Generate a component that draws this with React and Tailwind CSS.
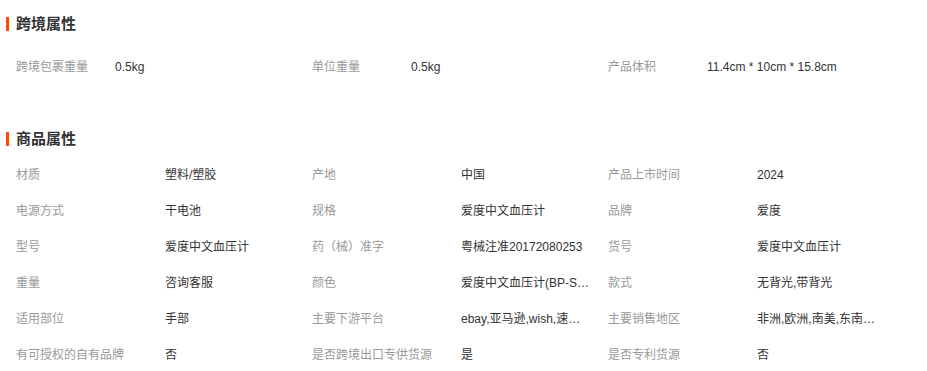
import React from "react";

const crossBorder = [
  { label: "跨境包裹重量", value: "0.5kg" },
  { label: "单位重量", value: "0.5kg" },
  { label: "产品体积", value: "11.4cm * 10cm * 15.8cm" },
];

// wide: value cell gets a few more pixels before the ellipsis
const attrs = [
  { label: "材质", value: "塑料/塑胶" },
  { label: "产地", value: "中国" },
  { label: "产品上市时间", value: "2024" },
  { label: "电源方式", value: "干电池" },
  { label: "规格", value: "爱度中文血压计" },
  { label: "品牌", value: "爱度" },
  { label: "型号", value: "爱度中文血压计" },
  { label: "药（械）准字", value: "粤械注准20172080253" },
  { label: "货号", value: "爱度中文血压计" },
  { label: "重量", value: "咨询客服" },
  { label: "颜色", value: "爱度中文血压计(BP-SM01)", wide: true },
  { label: "款式", value: "无背光,带背光" },
  { label: "适用部位", value: "手部" },
  { label: "主要下游平台", value: "ebay,亚马逊,wish,速卖通,独立站" },
  { label: "主要销售地区", value: "非洲,欧洲,南美,东南亚,北美" },
  { label: "有可授权的自有品牌", value: "否" },
  { label: "是否跨境出口专供货源", value: "是" },
  { label: "是否专利货源", value: "否" },
];

const SectionTitle = ({ children }) => (
  <div className="flex items-center h-5 pl-[6px]">
    <span className="w-[3px] h-[14px] bg-[#ff4a00] mr-[7px]" />
    <h2 className="text-[15px] font-bold text-[#333] leading-5">{children}</h2>
  </div>
);

const App = () => {
  return (
    <div
      className="bg-white w-[927px] min-h-[371px] pt-[14px]"
      style={{ fontFamily: '"Liberation Sans", "Noto Sans CJK SC", sans-serif' }}
    >
      {/* 跨境属性 */}
      <SectionTitle>跨境属性</SectionTitle>
      <div className="grid grid-cols-[296px_296px_296px] pl-4 mt-[15px]">
        {crossBorder.map((item, i) => (
          <div key={i} className="flex items-center h-9 text-xs">
            <span className="w-[99px] shrink-0 text-[#999]">{item.label}</span>
            <span className="text-[#333]">{item.value}</span>
          </div>
        ))}
      </div>

      {/* 商品属性 */}
      <div className="mt-[44px]">
        <SectionTitle>商品属性</SectionTitle>
      </div>
      <div className="grid grid-cols-[296px_296px_296px] pl-4 mt-[8px]">
        {attrs.map((item, i) => (
          <div key={i} className="flex items-center h-9 text-xs">
            <span className="w-[149px] shrink-0 text-[#999]">{item.label}</span>
            <span className={`${item.wide ? "w-[132px]" : "w-[128px]"} truncate text-[#333]`}>
              {item.value}
            </span>
          </div>
        ))}
      </div>
    </div>
  );
};

export default App;
